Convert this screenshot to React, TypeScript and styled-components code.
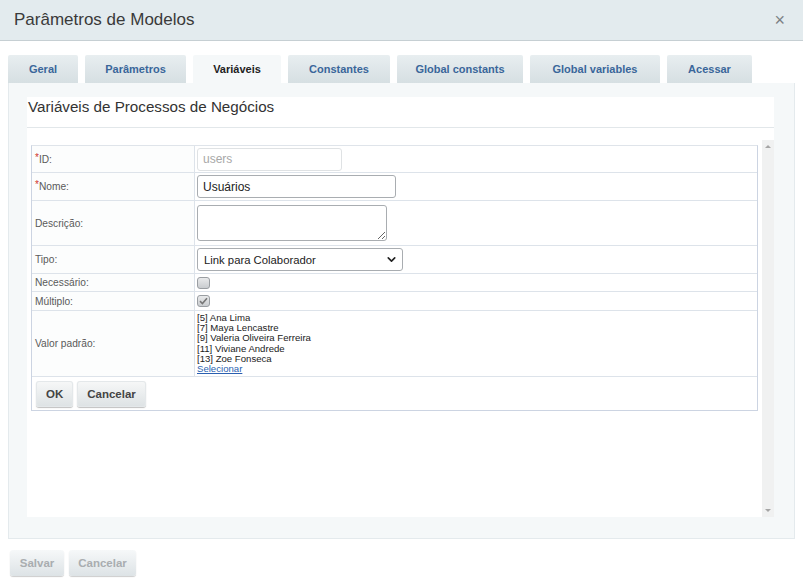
import styled, { createGlobalStyle } from "styled-components";
import { ChevronDown } from "lucide-react";

const GlobalStyle = createGlobalStyle`
  html, body {
    margin: 0;
    padding: 0;
    background: #ffffff;
    font-family: "Liberation Sans", Arial, sans-serif;
    color: #333;
  }
`;

const tabs = [
  { label: "Geral", width: 70 },
  { label: "Parâmetros", width: 101 },
  { label: "Variáveis", width: 88, active: true },
  { label: "Constantes", width: 102 },
  { label: "Global constants", width: 126 },
  { label: "Global variables", width: 130 },
  { label: "Acessar", width: 85 },
];

const users = [
  "[5] Ana Lima",
  "[7] Maya Lencastre",
  "[9] Valeria Oliveira Ferreira",
  "[11] Viviane Andrede",
  "[13] Zoe Fonseca",
];

export default function App() {
  return (
    <>
      <GlobalStyle />
      <Dialog>
        <Header>
          <Title>Parâmetros de Modelos</Title>
          <Close>×</Close>
        </Header>
        <Body>
          <TabBar>
            {tabs.map((t) => (
              <Tab key={t.label} $width={t.width} $active={t.active}>
                {t.label}
              </Tab>
            ))}
          </TabBar>
          <Panel>
            <Card>
              <CardTitle>Variáveis de Processos de Negócios</CardTitle>
              <ScrollArea>
                <FormTable>
                  <Row $h={27}>
                    <Label>
                      <Req>*</Req>ID:
                    </Label>
                    <Value>
                      <TextInput $w={145} disabled value="users" readOnly />
                    </Value>
                  </Row>
                  <Row $h={28}>
                    <Label>
                      <Req>*</Req>Nome:
                    </Label>
                    <Value>
                      <TextInput $w={199} defaultValue="Usuários" />
                    </Value>
                  </Row>
                  <Row $h={45}>
                    <Label>Descrição:</Label>
                    <Value>
                      <TextArea />
                    </Value>
                  </Row>
                  <Row $h={28}>
                    <Label>Tipo:</Label>
                    <Value>
                      <SelectWrap>
                        <Select defaultValue="link">
                          <option value="link">Link para Colaborador</option>
                        </Select>
                        <SelectArrow>
                          <ChevronDown size={13} strokeWidth={3} />
                        </SelectArrow>
                      </SelectWrap>
                    </Value>
                  </Row>
                  <Row $h={18}>
                    <Label>Necessário:</Label>
                    <Value>
                      <Check />
                    </Value>
                  </Row>
                  <Row $h={19}>
                    <Label>Múltiplo:</Label>
                    <Value>
                      <Check>
                        <svg width="9" height="8" viewBox="0 0 9 8">
                          <path
                            d="M1 4.2 L3.4 6.5 L8 1.3"
                            fill="none"
                            stroke="#777"
                            strokeWidth="1.6"
                          />
                        </svg>
                      </Check>
                    </Value>
                  </Row>
                  <Row $h={66}>
                    <Label>Valor padrão:</Label>
                    <Value>
                      <UserList>
                        {users.map((u) => (
                          <UserLine key={u}>{u}</UserLine>
                        ))}
                        <UserLine>
                          <SelectLink href="#">Selecionar</SelectLink>
                        </UserLine>
                      </UserList>
                    </Value>
                  </Row>
                  <ButtonRow>
                    <Button>OK</Button>
                    <Button>Cancelar</Button>
                  </ButtonRow>
                </FormTable>
                <Scrollbar>
                  <ArrowUp />
                  <ArrowDown />
                </Scrollbar>
              </ScrollArea>
            </Card>
          </Panel>
          <Footer>
            <FooterButton $w={54}>Salvar</FooterButton>
            <FooterButton $w={67}>Cancelar</FooterButton>
          </Footer>
        </Body>
      </Dialog>
    </>
  );
}

const Dialog = styled.div`
  width: 803px;
  height: 588px;
  display: flex;
  flex-direction: column;
  overflow: hidden;
`;

const Header = styled.header`
  height: 40px;
  flex: none;
  background: #e3ebee;
  border-bottom: 1px solid #c6cfd3;
  display: flex;
  align-items: center;
  justify-content: space-between;
  padding: 0 18px 0 14px;
`;

const Title = styled.h1`
  margin: 0;
  font-size: 17px;
  font-weight: normal;
  color: #3a3a3a;
`;

const Close = styled.span`
  font-size: 18px;
  color: #7b8185;
  line-height: 1;
`;

const Body = styled.div`
  padding: 14px 8px 0 8px;
`;

const TabBar = styled.div`
  display: flex;
  gap: 7px;
  height: 28px;
`;

const Tab = styled.div<{ $width: number; $active?: boolean }>`
  width: ${(p) => p.$width}px;
  display: flex;
  align-items: center;
  justify-content: center;
  font-size: 11px;
  font-weight: bold;
  border-radius: 2px 2px 0 0;
  color: ${(p) => (p.$active ? "#222" : "#3a669a")};
  background: ${(p) =>
    p.$active ? "#f5f8f9" : "linear-gradient(#e8eef0, #d6dfe2)"};
`;

const Panel = styled.div`
  background: #f5f8f9;
  border: 1px solid #e4eaed;
  border-top: none;
  padding: 14px 20px 21px 18px;
`;

const Card = styled.div`
  background: #ffffff;
  height: 420px;
  display: flex;
  flex-direction: column;
`;

const CardTitle = styled.div`
  height: 31px;
  flex: none;
  font-size: 15.2px;
  color: #333;
  padding: 1px 0 0 1px;
  box-sizing: border-box;
  border-bottom: 1px solid #e2e7ea;
`;

const ScrollArea = styled.div`
  flex: 1;
  margin-top: 12px;
  display: flex;
  gap: 4px;
  padding-left: 4px;
`;

const FormTable = styled.div`
  flex: 1;
  align-self: flex-start;
  margin-top: 5px;
  border: 1px solid #ccd4e2;
  border-top-color: #dfe4ea;
`;

const Row = styled.div<{ $h: number }>`
  display: grid;
  grid-template-columns: 163px 1fr;
  height: ${(p) => p.$h}px;
  box-sizing: border-box;
  border-bottom: 1px solid #dde3ea;
`;

const Label = styled.div`
  display: flex;
  align-items: center;
  padding-left: 3px;
  font-size: 10.2px;
  color: #5a5a5a;
  border-right: 1px solid #dde3ea;
  background: #fcfdfd;
`;

const Req = styled.span`
  color: #d0342c;
  font-size: 10px;
  margin-top: -4px;
`;

const Value = styled.div`
  display: flex;
  align-items: center;
  padding-left: 2px;
`;

const TextInput = styled.input<{ $w: number }>`
  width: ${(p) => p.$w}px;
  height: 23px;
  box-sizing: border-box;
  border: 1px solid #a9adb1;
  border-radius: 3px;
  padding: 0 5px;
  font-family: "Liberation Sans", Arial, sans-serif;
  font-size: 12px;
  color: #222;
  background: #fff;
  &:disabled {
    border-color: #dfe2e4;
    color: #a8a8a8;
  }
`;

const TextArea = styled.textarea`
  width: 190px;
  height: 36px;
  box-sizing: border-box;
  border: 1px solid #a9adb1;
  border-radius: 3px;
  font-family: "Liberation Sans", Arial, sans-serif;
  margin: 0;
`;

const SelectWrap = styled.div`
  position: relative;
  width: 206px;
  height: 23px;
`;

const Select = styled.select`
  appearance: none;
  width: 100%;
  height: 100%;
  box-sizing: border-box;
  border: 1px solid #a9adb1;
  border-radius: 3px;
  background: #fff;
  padding: 0 0 0 6px;
  font-family: "Liberation Sans", Arial, sans-serif;
  font-size: 11.3px;
  color: #222;
`;

const SelectArrow = styled.span`
  position: absolute;
  right: 5px;
  top: 5px;
  color: #222;
  pointer-events: none;
  display: flex;
`;

const Check = styled.span`
  width: 13px;
  height: 12px;
  box-sizing: border-box;
  border: 1px solid #9a9ea2;
  border-radius: 3px;
  background: linear-gradient(#e9eaeb, #c9cccf);
  display: flex;
  align-items: center;
  justify-content: center;
`;

const UserList = styled.div`
  display: flex;
  flex-direction: column;
  font-size: 9.6px;
  color: #222;
`;

const UserLine = styled.div`
  height: 10.3px;
  line-height: 10.3px;
  white-space: nowrap;
`;

const SelectLink = styled.a`
  color: #2a5fb0;
  text-decoration: underline;
`;

const ButtonRow = styled.div`
  height: 33px;
  display: flex;
  align-items: center;
  gap: 4px;
  padding-left: 4px;
`;

const Button = styled.button`
  height: 26px;
  padding: 0 10px;
  border: none;
  border-radius: 3px;
  background: linear-gradient(#f7f8f8, #dde2e4);
  box-shadow: 0 1px 1px rgba(0, 0, 0, 0.25), inset 0 0 0 1px #e4e8ea;
  font-family: "Liberation Sans", Arial, sans-serif;
  font-weight: bold;
  font-size: 11.5px;
  color: #444;
`;

const Scrollbar = styled.div`
  width: 12px;
  flex: none;
  background: #f0f1f1;
  display: flex;
  flex-direction: column;
  justify-content: space-between;
  align-items: center;
  padding: 5px 0;
`;

const ArrowUp = styled.span`
  width: 0;
  height: 0;
  border-left: 3px solid transparent;
  border-right: 3px solid transparent;
  border-bottom: 3px solid #a5a5a5;
`;

const ArrowDown = styled.span`
  width: 0;
  height: 0;
  border-left: 3px solid transparent;
  border-right: 3px solid transparent;
  border-top: 3px solid #a5a5a5;
`;

const Footer = styled.div`
  display: flex;
  gap: 5px;
  margin-top: 11px;
  padding-left: 2px;
`;

const FooterButton = styled.button<{ $w: number }>`
  width: ${(p) => p.$w}px;
  height: 26px;
  border: none;
  border-radius: 3px;
  background: linear-gradient(#f6f8f9, #dde3e6);
  box-shadow: 0 1px 1px rgba(0, 0, 0, 0.2);
  font-family: "Liberation Sans", Arial, sans-serif;
  font-weight: bold;
  font-size: 11.5px;
  color: #a9adb0;
`;
